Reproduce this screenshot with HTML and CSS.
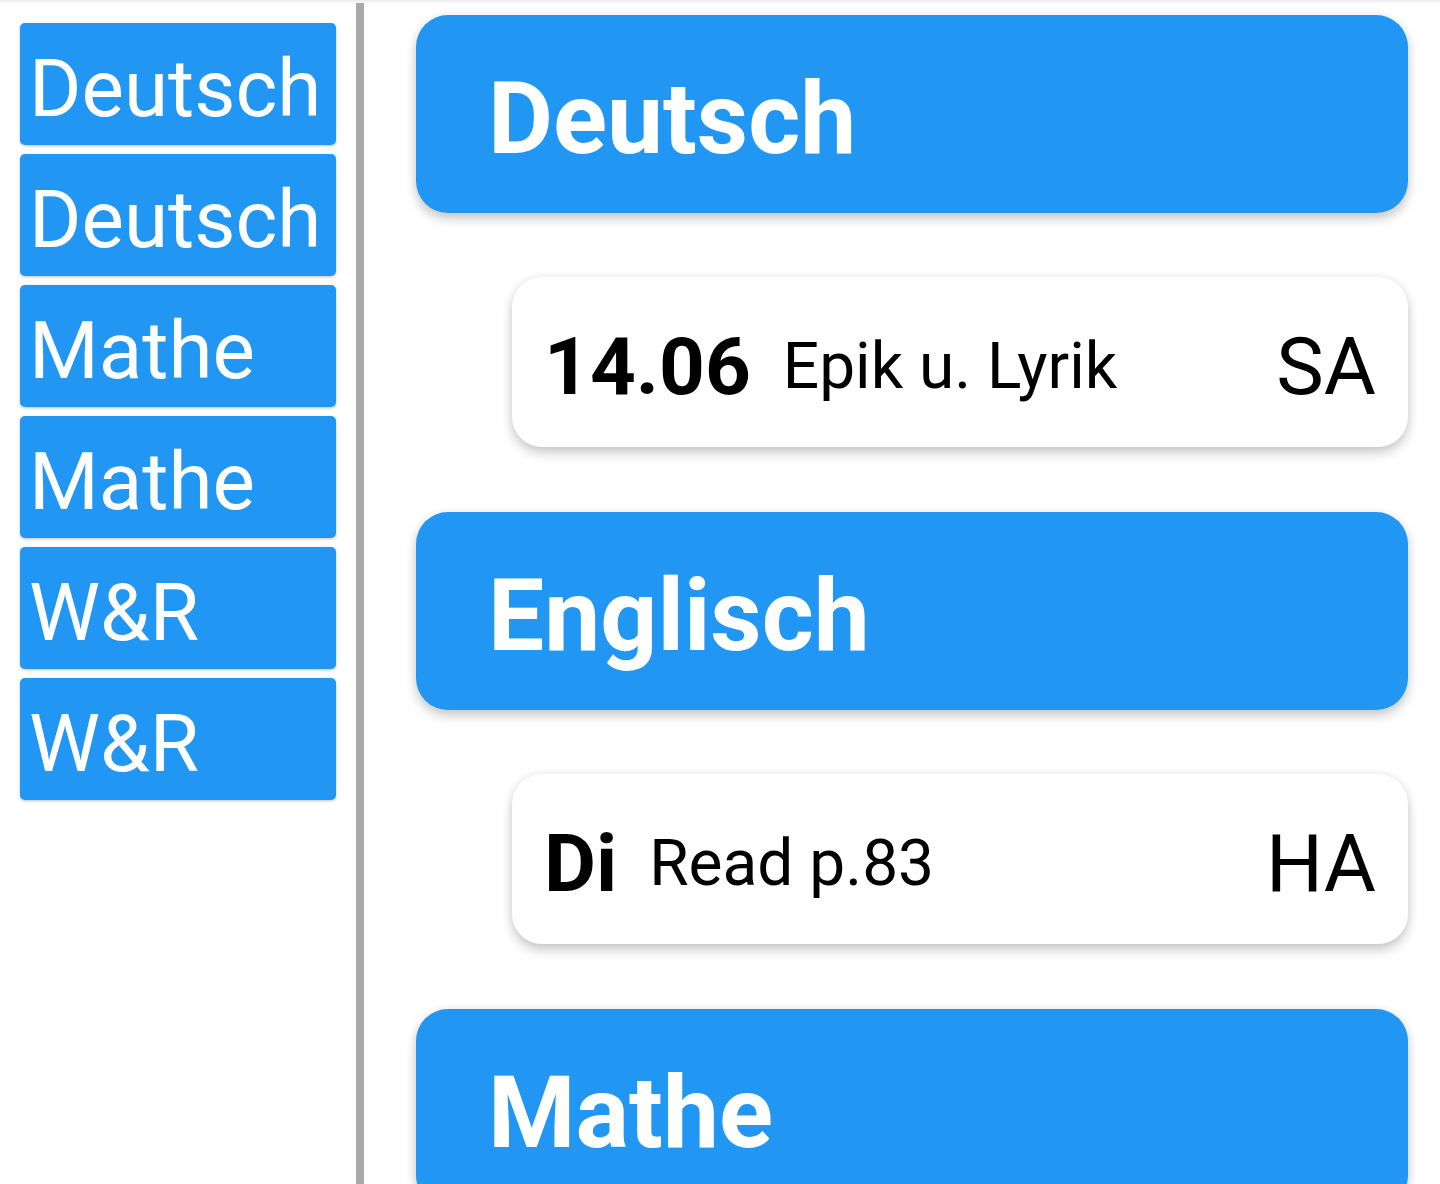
FILE: index.html
```html
<!DOCTYPE html>
<html lang="de">
<head>
<meta charset="utf-8">
<title>Fächer</title>
<link rel="stylesheet" href="styles.css">
</head>
<body>
<div class="topstrip"></div>
<div class="app">
  <nav class="sidebar">
    <div class="subject-btn">Deutsch</div>
    <div class="subject-btn">Deutsch</div>
    <div class="subject-btn">Mathe</div>
    <div class="subject-btn">Mathe</div>
    <div class="subject-btn">W&amp;R</div>
    <div class="subject-btn">W&amp;R</div>
  </nav>
  <div class="divider"></div>
  <main class="content">
    <section class="group">
      <div class="group-header">Deutsch</div>
      <div class="entry">
        <span class="entry-date">14.06</span>
        <span class="entry-title">Epik u. Lyrik</span>
        <span class="entry-type">SA</span>
      </div>
    </section>
    <section class="group">
      <div class="group-header">Englisch</div>
      <div class="entry">
        <span class="entry-date">Di</span>
        <span class="entry-title">Read p.83</span>
        <span class="entry-type">HA</span>
      </div>
    </section>
    <section class="group">
      <div class="group-header">Mathe</div>
    </section>
  </main>
</div>
</body>
</html>
```
FILE: styles.css
```css
* { box-sizing: border-box; }
html, body {
  margin: 0;
  padding: 0;
  height: 100%;
  overflow: hidden;
  background: #ffffff;
  font-family: Roboto, "Liberation Sans", sans-serif;
}
.topstrip {
  height: 3px;
  background: linear-gradient(#ededed, #f8f8f8);
}
.app {
  display: flex;
  height: calc(100% - 3px);
}
.sidebar {
  width: 356px;
  flex: none;
  padding: 20px 20px 0 20px;
  display: flex;
  flex-direction: column;
  gap: 9px;
}
.subject-btn {
  height: 122px;
  background: #2196f3;
  color: #ffffff;
  border-radius: 5px;
  box-shadow: 0 1px 3px rgba(0, 0, 0, 0.25);
  font-size: 80px;
  font-weight: 400;
  line-height: 94px;
  padding: 19px 0 0 9px;
  white-space: nowrap;
}
.divider {
  width: 8px;
  flex: none;
  background: #a9a9a9;
}
.content {
  flex: 1;
  padding: 12px 32px 0 52px;
  display: flex;
  flex-direction: column;
}
.group {
  display: flex;
  flex-direction: column;
}
.group-header {
  height: 198px;
  margin-bottom: 64px;
  background: #2196f3;
  color: #ffffff;
  border-radius: 32px;
  box-shadow: 0 6px 12px rgba(0, 0, 0, 0.2), 0 0 10px rgba(0, 0, 0, 0.06);
  font-size: 100px;
  font-weight: 700;
  line-height: 117px;
  padding: 45px 0 0 72px;
  white-space: nowrap;
}
.entry {
  margin-left: 96px;
  height: 170px;
  margin-bottom: 65px;
  background: #ffffff;
  border-radius: 30px;
  box-shadow: 0 6px 12px rgba(0, 0, 0, 0.2), 0 0 10px rgba(0, 0, 0, 0.06);
  display: flex;
  align-items: center;
  padding: 9px 32px 0 32px;
  color: #000000;
  white-space: nowrap;
}
.entry-date {
  font-size: 80px;
  font-weight: 700;
}
.entry-title {
  font-size: 64px;
  font-weight: 400;
  margin-left: 32px;
  flex: 1;
}
.entry-type {
  font-size: 80px;
  font-weight: 400;
}
```
